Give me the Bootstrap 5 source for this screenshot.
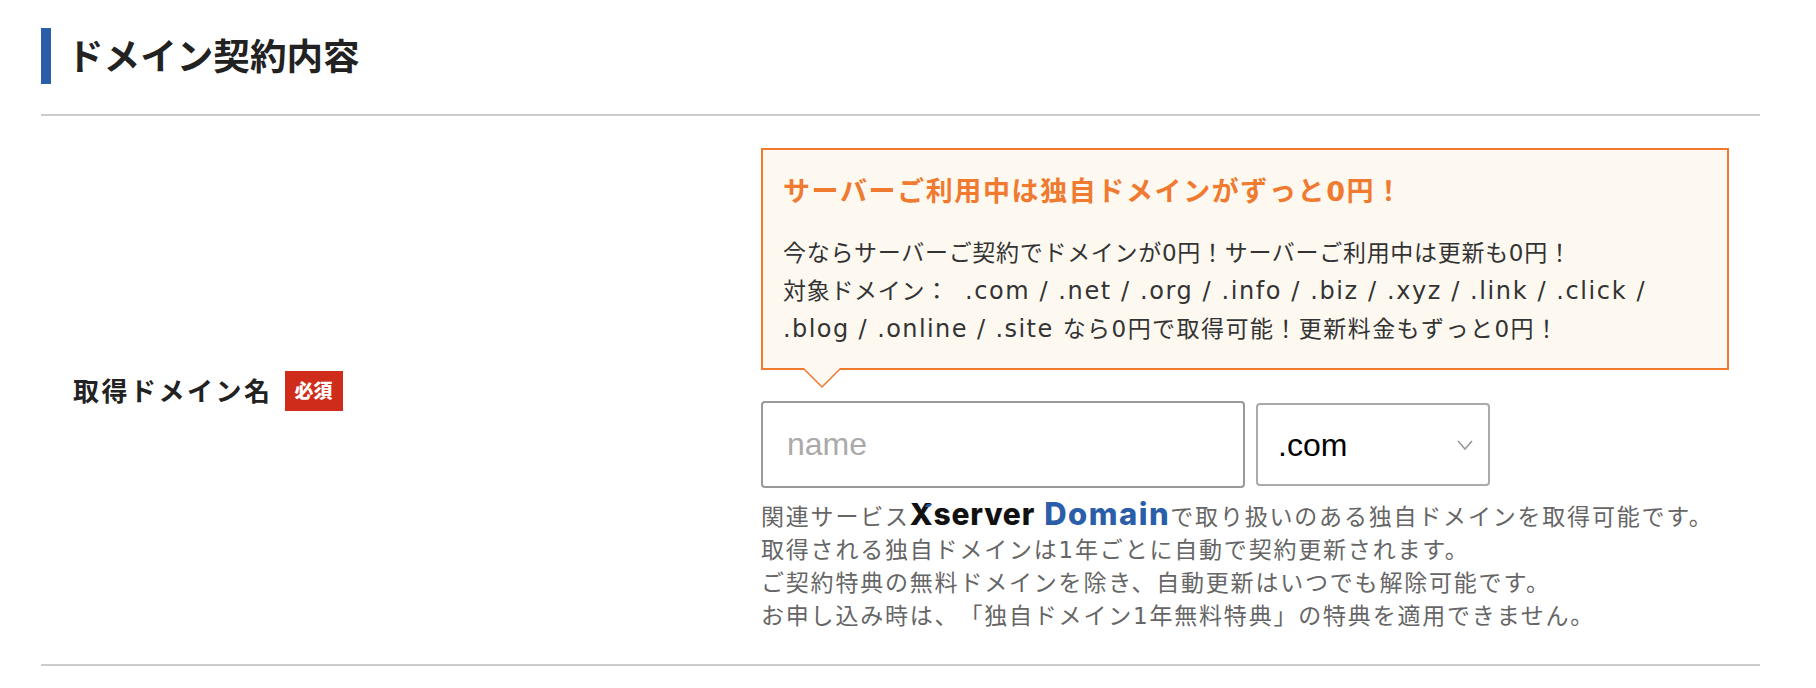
<!DOCTYPE html>
<html lang="ja">
<head>
    <meta charset="UTF-8">
    <meta name="viewport" content="width=device-width, initial-scale=1">
    <title>ドメイン契約内容</title>
    <link href="https://cdn.jsdelivr.net/npm/bootstrap@5.3.0/dist/css/bootstrap.min.css" rel="stylesheet">
    <style>
        body { font-family: "DejaVu Sans", "Noto Sans CJK JP", sans-serif; color: #222; background: #fff; text-spacing-trim: space-all; }
        .page-wrap { padding: 28px 56px 0 41px; }
        .sec-title { border-left: 10px solid #2a5ea8; height: 56px; padding-left: 16px; margin: 0 0 30px; font-family: "Noto Sans CJK JP", sans-serif; font-size: 36.6px; font-weight: 700; line-height: 54px; color: #222; }
        .form-block { border-top: 2px solid #ccc; border-bottom: 2px solid #ccc; padding: 32px 31px 31px 32px; }
        .label-col { width: 688px; }
        .label-text { font-family: "Noto Sans CJK JP", sans-serif; font-size: 26px; font-weight: 700; letter-spacing: 2.5px; margin-bottom: 2px; }
        .req-badge { width: 58px; height: 40px; margin-left: 12px; background: #d02c1c; color: #fff; font-family: "Noto Sans CJK JP", sans-serif; font-size: 19px; font-weight: 900; }
        .field-col { width: 968px; }
        .notice-box { position: relative; height: 222px; padding: 22px 20px 0; background: #fdf9f1; border: 2px solid #ef7a30; }
        .notice-tail { position: absolute; left: 39px; top: 218px; }
        .notice-head { font-size: 27px; font-weight: 700; line-height: 40px; color: #ef7a30; margin: 0 0 22px; letter-spacing: 1.6px; font-family: "DejaVu Sans", "Noto Sans CJK JP", sans-serif; }
        .notice-body { font-size: 23px; line-height: 38px; margin: 0; white-space: nowrap; color: #333; letter-spacing: .7px; }
        .latin-txt { font-size: 24px; letter-spacing: 1.42px; }
        .latin-gap { margin-left: 8px; letter-spacing: 1.6px; }
        .notice-end { letter-spacing: 1.45px; }
        .domain-row { margin-top: 31px; gap: 11px; }
        .name-input.form-control { width: 484px; height: 87px; border: 2px solid #999; border-radius: 4px; padding: 0 24px; font-family: "Liberation Sans", sans-serif; font-size: 32px; }
        .name-input.form-control::placeholder { color: #aaa; }
        .tld-select.form-select { width: 234px; height: 83px; border: 2px solid #aaa; border-radius: 4px; padding: 0 20px; font-family: "Liberation Sans", sans-serif; font-size: 32px; color: #000;
            background-position: right 14px center; background-size: 18px 12px;
            background-image: url("data:image/svg+xml,%3csvg xmlns='http://www.w3.org/2000/svg' viewBox='0 0 18 12'%3e%3cpath fill='none' stroke='%23999' stroke-width='1.6' d='M2 2l7 8 7-8'/%3e%3c/svg%3e"); }
        .help-text { margin: 13px 0 0; font-size: 23px; line-height: 33px; color: #666; white-space: nowrap; letter-spacing: 1.8px; }
        .brand-x { position: relative; font-family: "Inter", sans-serif; font-weight: 800; font-size: 30px; line-height: 0; color: #111; letter-spacing: .8px; }
        .brand-x::before { content: ""; position: absolute; left: 16px; top: 8px; width: 5px; height: 3px; background: #2a5ea8; transform: skewX(-40deg); }
        .brand-d { font-family: "Inter", sans-serif; font-weight: 800; font-size: 31px; line-height: 0; color: #2a5ea8; letter-spacing: 1.5px; }
    </style>
</head>
<body>
    <div class="page-wrap">
        <h2 class="sec-title">ドメイン契約内容</h2>
        <div class="form-block d-flex align-items-center">
            <div class="label-col d-flex align-items-center">
                <span class="label-text">取得ドメイン名</span>
                <span class="req-badge d-flex align-items-center justify-content-center">必須</span>
            </div>
            <div class="field-col">
                <div class="notice-box">
                    <p class="notice-head">サーバーご利用中は独自ドメインがずっと0円！</p>
                    <p class="notice-body">今ならサーバーご契約でドメインが0円！サーバーご利用中は更新も0円！<br>対象ドメイン： <span class="latin-txt latin-gap">.com / .net / .org / .info / .biz / .xyz / .link / .click /</span><br><span class="latin-txt">.blog / .online / .site </span><span class="notice-end">なら0円で取得可能！更新料金もずっと0円！</span></p>
                    <svg class="notice-tail" width="40" height="21" viewBox="0 0 40 21"><path d="M1 0L20 19 39 0" fill="#fdf9f1" stroke="#ef7a30" stroke-width="1.5"/></svg>
                </div>
                <div class="domain-row d-flex align-items-center">
                    <input type="text" class="form-control name-input" placeholder="name">
                    <select class="form-select tld-select"><option>.com</option></select>
                </div>
                <p class="help-text">関連サービス<span class="brand-x">Xserver</span> <span class="brand-d">Domain</span>で取り扱いのある独自ドメインを取得可能です。<br>取得される独自ドメインは1年ごとに自動で契約更新されます。<br>ご契約特典の無料ドメインを除き、自動更新はいつでも解除可能です。<br>お申し込み時は、「独自ドメイン1年無料特典」の特典を適用できません。</p>
            </div>
        </div>
    </div>
    <script src="https://cdn.jsdelivr.net/npm/bootstrap@5.3.0/dist/js/bootstrap.bundle.min.js"></script>
</body>
</html>
